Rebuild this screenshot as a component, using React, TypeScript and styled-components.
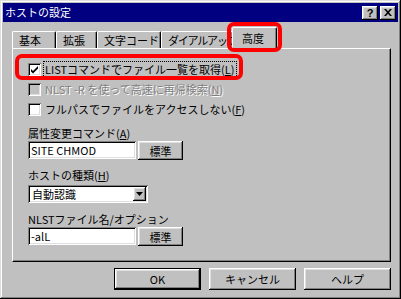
import React from "react";
import styled, { createGlobalStyle, css } from "styled-components";

const Global = createGlobalStyle`
  html, body { margin: 0; padding: 0; background: #c0c0c0; }
  body { font-family: "Noto Sans CJK JP", "Noto Sans", sans-serif; font-size: 11px; color: #000; }
  * { box-sizing: border-box; }
`;

const raised = css`
  box-shadow: inset -1px -1px #000, inset 1px 1px #fff, inset -2px -2px #808080, inset 2px 2px #dfdfdf;
`;
const sunken = css`
  box-shadow: inset 1px 1px #808080, inset -1px -1px #fff, inset 2px 2px #000, inset -2px -2px #dfdfdf;
`;

const Window = styled.div`
  position: relative;
  width: 401px;
  height: 299px;
  padding: 3px;
  background: #c0c0c0;
  box-shadow: inset -1px -1px #000, inset 1px 1px #dfdfdf, inset -2px -2px #808080, inset 2px 2px #fff;
  display: flex;
  flex-direction: column;
`;

const TitleBar = styled.div`
  height: 19px;
  background: #000080;
  color: #fff;
  display: flex;
  align-items: center;
  padding: 0 2px 0 2px;
  font-size: 11px;
`;

const Title = styled.span`
  flex: 1;
  line-height: 19px;
`;

const TitleButton = styled.div`
  width: 16px;
  height: 14px;
  margin-left: 2px;
  background: #c0c0c0;
  ${raised}
  display: flex;
  align-items: center;
  justify-content: center;
  font: bold 11px "Liberation Sans", sans-serif;
  color: #000;
`;

const Body = styled.div`
  display: flex;
  flex-direction: column;
  padding: 5px 7px 0 9px;
`;

const TabRow = styled.div`
  display: flex;
  align-items: flex-end;
  height: 21px;
`;

const Tab = styled.div<{ $w: number; $active?: boolean; $tight?: boolean }>`
  position: relative;
  z-index: ${(p) => (p.$active ? 2 : 1)};
  width: ${(p) => p.$w}px;
  height: ${(p) => (p.$active ? 22 : 17)}px;
  margin-left: ${(p) => (p.$active ? -1 : 0)}px;
  margin-bottom: ${(p) => (p.$active ? -1 : 0)}px;
  background: #c0c0c0;
  border-top: 1px solid #fff;
  border-left: 1px solid #fff;
  border-right: 1px solid #000;
  border-radius: 2px 2px 0 0;
  box-shadow: inset -1px 0 #808080;
  overflow: hidden;
  white-space: nowrap;
  letter-spacing: ${(p) => (p.$tight ? "-1.2px" : "0")};
  padding: ${(p) => (p.$active ? "3px 0 0 9px" : "1px 0 0 6px")};
  line-height: 14px;
`;

const Panel = styled.div`
  position: relative;
  z-index: 1;
  height: 214px;
  border-top: 1px solid #fff;
  border-left: 1px solid #fff;
  border-right: 1px solid #000;
  border-bottom: 1px solid #000;
  box-shadow: inset -1px -1px #808080;
  padding: 10px 0 0 15px;
  display: flex;
  flex-direction: column;
`;

const CheckRow = styled.div`
  height: 20px;
  display: flex;
  align-items: center;
`;

const CheckBox = styled.div<{ $disabled?: boolean }>`
  width: 13px;
  height: 13px;
  flex: none;
  background: ${(p) => (p.$disabled ? "#c0c0c0" : "#fff")};
  ${sunken}
  display: flex;
  align-items: center;
  justify-content: center;
`;

const CheckText = styled.span<{ $focus?: boolean; $disabled?: boolean }>`
  margin-left: 2px;
  padding: 0 1px;
  line-height: 15px;
  border: 1px dotted ${(p) => (p.$focus ? "#000" : "transparent")};
  color: ${(p) => (p.$disabled ? "#808080" : "#000")};
  text-shadow: ${(p) => (p.$disabled ? "1px 1px #fff" : "none")};
  white-space: nowrap;
`;

const Key = styled.span`
  text-decoration: underline;
`;

const Label = styled.div<{ $mt: number }>`
  margin-top: ${(p) => p.$mt}px;
  height: 16px;
  line-height: 16px;
  white-space: nowrap;
`;

const FieldRow = styled.div`
  display: flex;
  align-items: flex-start;
  gap: 2px;
`;

const TextInput = styled.div`
  width: 108px;
  height: 18px;
  background: #fff;
  ${sunken}
  padding: 0 3px;
  line-height: 18px;
  white-space: nowrap;
`;

const Button = styled.div<{ $w: number; $h: number; $default?: boolean }>`
  width: ${(p) => p.$w}px;
  height: ${(p) => p.$h}px;
  background: #c0c0c0;
  display: flex;
  align-items: center;
  justify-content: center;
  white-space: nowrap;
  ${(p) =>
    p.$default
      ? css`
          box-shadow: inset 0 0 0 1px #000, inset -2px -2px #000, inset 2px 2px #fff, inset -3px -3px #808080, inset 3px 3px #dfdfdf;
        `
      : raised}
`;

const Select = styled.div`
  margin-top: 2px;
  width: 120px;
  height: 18px;
  background: #fff;
  ${sunken}
  padding: 2px;
  display: flex;
  align-items: center;
`;

const SelectText = styled.span`
  flex: 1;
  padding-left: 2px;
  line-height: 14px;
`;

const DropButton = styled.div`
  width: 13px;
  height: 14px;
  background: #c0c0c0;
  ${raised}
  display: flex;
  align-items: center;
  justify-content: center;
`;

const Footer = styled.div`
  margin-top: 6px;
  display: flex;
  justify-content: flex-end;
  gap: 8px;
`;

const Highlight = styled.div<{ $x: number; $y: number; $w: number; $h: number }>`
  position: absolute;
  left: ${(p) => p.$x}px;
  top: ${(p) => p.$y}px;
  width: ${(p) => p.$w}px;
  height: ${(p) => p.$h}px;
  border: 4px solid #f00;
  border-radius: 7px;
  z-index: 5;
  pointer-events: none;
`;

const Check = () => (
  <svg width="9" height="9" viewBox="0 0 9 9">
    <path d="M1 4 L3 6 L8 1 V3.5 L3 8.5 L1 6.5 Z" fill="#000" />
  </svg>
);

const CloseGlyph = () => (
  <svg width="8" height="7" viewBox="0 0 8 7">
    <path d="M0 0 H2 L4 2.2 L6 0 H8 L5 3.5 L8 7 H6 L4 4.8 L2 7 H0 L3 3.5 Z" fill="#000" />
  </svg>
);

const Triangle = () => (
  <svg width="7" height="4" viewBox="0 0 7 4">
    <path d="M0 0 H7 L3.5 4 Z" fill="#000" />
  </svg>
);

export default function App() {
  return (
    <>
      <Global />
      <Window>
        <TitleBar>
          <Title>ホストの設定</Title>
          <TitleButton>?</TitleButton>
          <TitleButton>
            <CloseGlyph />
          </TitleButton>
        </TitleBar>
        <Body>
          <TabRow>
            <Tab $w={44}>基本</Tab>
            <Tab $w={41}>拡張</Tab>
            <Tab $w={64}>文字コード</Tab>
            <Tab $w={72} $tight>
              ダイアルアップ
            </Tab>
            <Tab $w={45} $active>
              高度
            </Tab>
          </TabRow>
          <Panel>
            <CheckRow>
              <CheckBox>
                <Check />
              </CheckBox>
              <CheckText $focus>
                LISTコマンドでファイル一覧を取得(<Key>L</Key>)
              </CheckText>
            </CheckRow>
            <CheckRow>
              <CheckBox $disabled />
              <CheckText $disabled>
                NLST -R を使って高速に再帰検索(<Key>N</Key>)
              </CheckText>
            </CheckRow>
            <CheckRow>
              <CheckBox />
              <CheckText>
                フルパスでファイルをアクセスしない(<Key>F</Key>)
              </CheckText>
            </CheckRow>
            <Label $mt={6}>
              属性変更コマンド(<Key>A</Key>)
            </Label>
            <FieldRow>
              <TextInput>SITE CHMOD</TextInput>
              <Button $w={45} $h={19}>
                標準
              </Button>
            </FieldRow>
            <Label $mt={7}>
              ホストの種類(<Key>H</Key>)
            </Label>
            <Select>
              <SelectText>自動認識</SelectText>
              <DropButton>
                <Triangle />
              </DropButton>
            </Select>
            <Label $mt={8}>NLSTファイル名/オプション</Label>
            <FieldRow>
              <TextInput>-alL</TextInput>
              <Button $w={45} $h={19}>
                標準
              </Button>
            </FieldRow>
          </Panel>
          <Footer>
            <Button $w={87} $h={22} $default>
              OK
            </Button>
            <Button $w={87} $h={22}>
              キャンセル
            </Button>
            <Button $w={87} $h={22}>
              ヘルプ
            </Button>
          </Footer>
        </Body>
        <Highlight $x={227} $y={22} $w={55} $h={30} />
        <Highlight $x={15} $y={54} $w={228} $h={26} />
      </Window>
    </>
  );
}
